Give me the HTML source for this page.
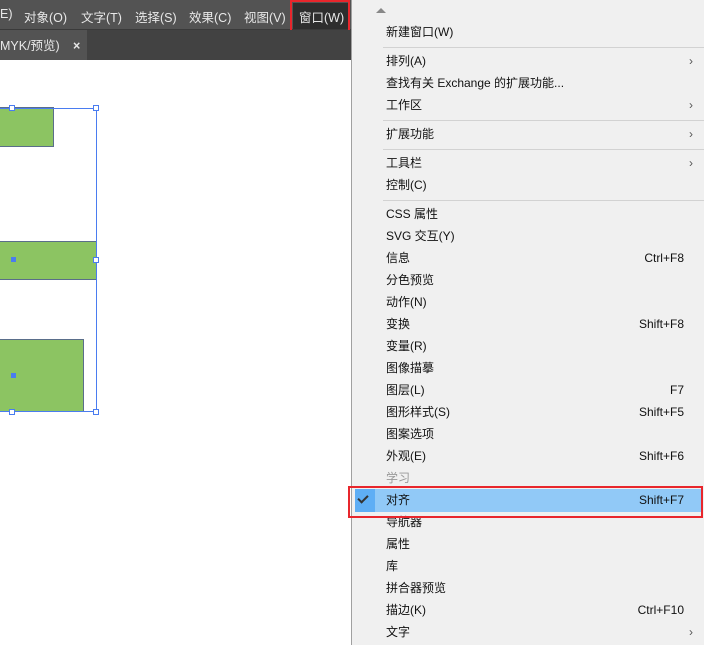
<!DOCTYPE html>
<html><head><meta charset="utf-8"><style>
*{margin:0;padding:0;box-sizing:border-box}
body{width:704px;height:645px;overflow:hidden;position:relative;background:#fff;font-family:"Liberation Sans","Noto Sans CJK SC",sans-serif;font-size:12px}
.bar{position:absolute;left:0;top:0;width:352px;height:30px;background:#535353;border-bottom:1px solid #3a3a3a}
.bar span{position:absolute;top:7px;color:#e8e8e8;font-size:12.5px}
.tabrow{position:absolute;left:0;top:30px;width:352px;height:30px;background:#424242}
.tab{position:absolute;left:0;top:0;width:87px;height:30px;background:#535353;color:#e8e8e8;font-size:12.5px}
.menu{position:absolute;left:351px;top:0;width:353px;height:645px;background:#f0f0f0;border-left:1px solid #a0a0a0}
.it{position:absolute;left:34px;height:22px;line-height:22px;color:#111;font-size:12px;width:298px}
.it .k{position:absolute;right:0;top:0}
.it .a{position:absolute;right:-9px;top:0;color:#555}
.sep{position:absolute;left:31px;right:0;height:1px;background:#d2d2d2}
.g{position:absolute;background:#8cc462;border:1px solid #5a6e8a;border-left:none}
.h{position:absolute;width:6px;height:6px;background:#fff;border:1px solid #4a7cf0}
.c{position:absolute;width:5px;height:5px;background:#4a7cf0}
</style></head><body>
<div class="bar">
<span style="left:0">E)</span><span style="left:24px">对象(O)</span><span style="left:81px">文字(T)</span><span style="left:135px">选择(S)</span><span style="left:189px">效果(C)</span><span style="left:244px">视图(V)</span>
<div style="position:absolute;left:293px;top:3px;width:55px;height:26px;background:#2e2e2e"></div>
<span style="left:299px">窗口(W)</span>
</div>
<div style="position:absolute;left:290px;top:0;width:60px;height:32px;border:2px solid #e8262c"></div>
<div class="tabrow"><div class="tab"><span style="position:absolute;left:0;top:5px">MYK/预览)</span><span style="position:absolute;left:73px;top:9px;font-weight:bold">×</span></div></div>

<div class="g" style="left:0;top:107px;width:54px;height:40px"></div>
<div class="g" style="left:0;top:241px;width:97px;height:39px"></div>
<div class="g" style="left:0;top:339px;width:84px;height:73px"></div>
<div style="position:absolute;left:0;top:108px;width:97px;height:304px;border:1px solid #4a7cf0;border-left:none"></div>
<div class="h" style="left:9px;top:105px"></div><div class="h" style="left:93px;top:105px"></div>
<div class="h" style="left:93px;top:257px"></div>
<div class="h" style="left:9px;top:409px"></div><div class="h" style="left:93px;top:409px"></div>
<div class="c" style="left:11px;top:257px"></div><div class="c" style="left:11px;top:373px"></div>

<div class="menu">
<div style="position:absolute;left:24px;top:8px;width:0;height:0;border-left:5px solid transparent;border-right:5px solid transparent;border-bottom:5px solid #888"></div>
<div class="it" style="top:21px">新建窗口(W)</div>
<div class="sep" style="top:47px"></div>
<div class="it" style="top:50px">排列(A)<span class="a">›</span></div>
<div class="it" style="top:72px">查找有关 Exchange 的扩展功能...</div>
<div class="it" style="top:94px">工作区<span class="a">›</span></div>
<div class="sep" style="top:120px"></div>
<div class="it" style="top:123px">扩展功能<span class="a">›</span></div>
<div class="sep" style="top:149px"></div>
<div class="it" style="top:152px">工具栏<span class="a">›</span></div>
<div class="it" style="top:174px">控制(C)</div>
<div class="sep" style="top:200px"></div>
<div class="it" style="top:203px">CSS 属性</div>
<div class="it" style="top:225px">SVG 交互(Y)</div>
<div class="it" style="top:247px">信息<span class="k">Ctrl+F8</span></div>
<div class="it" style="top:269px">分色预览</div>
<div class="it" style="top:291px">动作(N)</div>
<div class="it" style="top:313px">变换<span class="k">Shift+F8</span></div>
<div class="it" style="top:335px">变量(R)</div>
<div class="it" style="top:357px">图像描摹</div>
<div class="it" style="top:379px">图层(L)<span class="k">F7</span></div>
<div class="it" style="top:401px">图形样式(S)<span class="k">Shift+F5</span></div>
<div class="it" style="top:423px">图案选项</div>
<div class="it" style="top:445px">外观(E)<span class="k">Shift+F6</span></div>
<div class="it" style="top:467px;color:#999">学习</div>
<div style="position:absolute;left:3px;top:489px;width:347px;height:23px;background:#91c9f7"></div>
<div style="position:absolute;left:3px;top:489px;width:20px;height:23px;background:#5eaef5"></div>
<div style="position:absolute;left:8px;top:493px;width:6px;height:10px;border-right:2px solid #333;border-bottom:2px solid #333;transform:rotate(45deg)"></div>
<div class="it" style="top:489px">对齐<span class="k">Shift+F7</span></div>
<div class="it" style="top:511px">导航器</div>
<div class="it" style="top:533px">属性</div>
<div class="it" style="top:555px">库</div>
<div class="it" style="top:577px">拼合器预览</div>
<div class="it" style="top:599px">描边(K)<span class="k">Ctrl+F10</span></div>
<div class="it" style="top:621px">文字<span class="a">›</span></div>
</div>
<div style="position:absolute;left:348px;top:486px;width:355px;height:32px;border:2px solid #e8262c"></div>
</body></html>
